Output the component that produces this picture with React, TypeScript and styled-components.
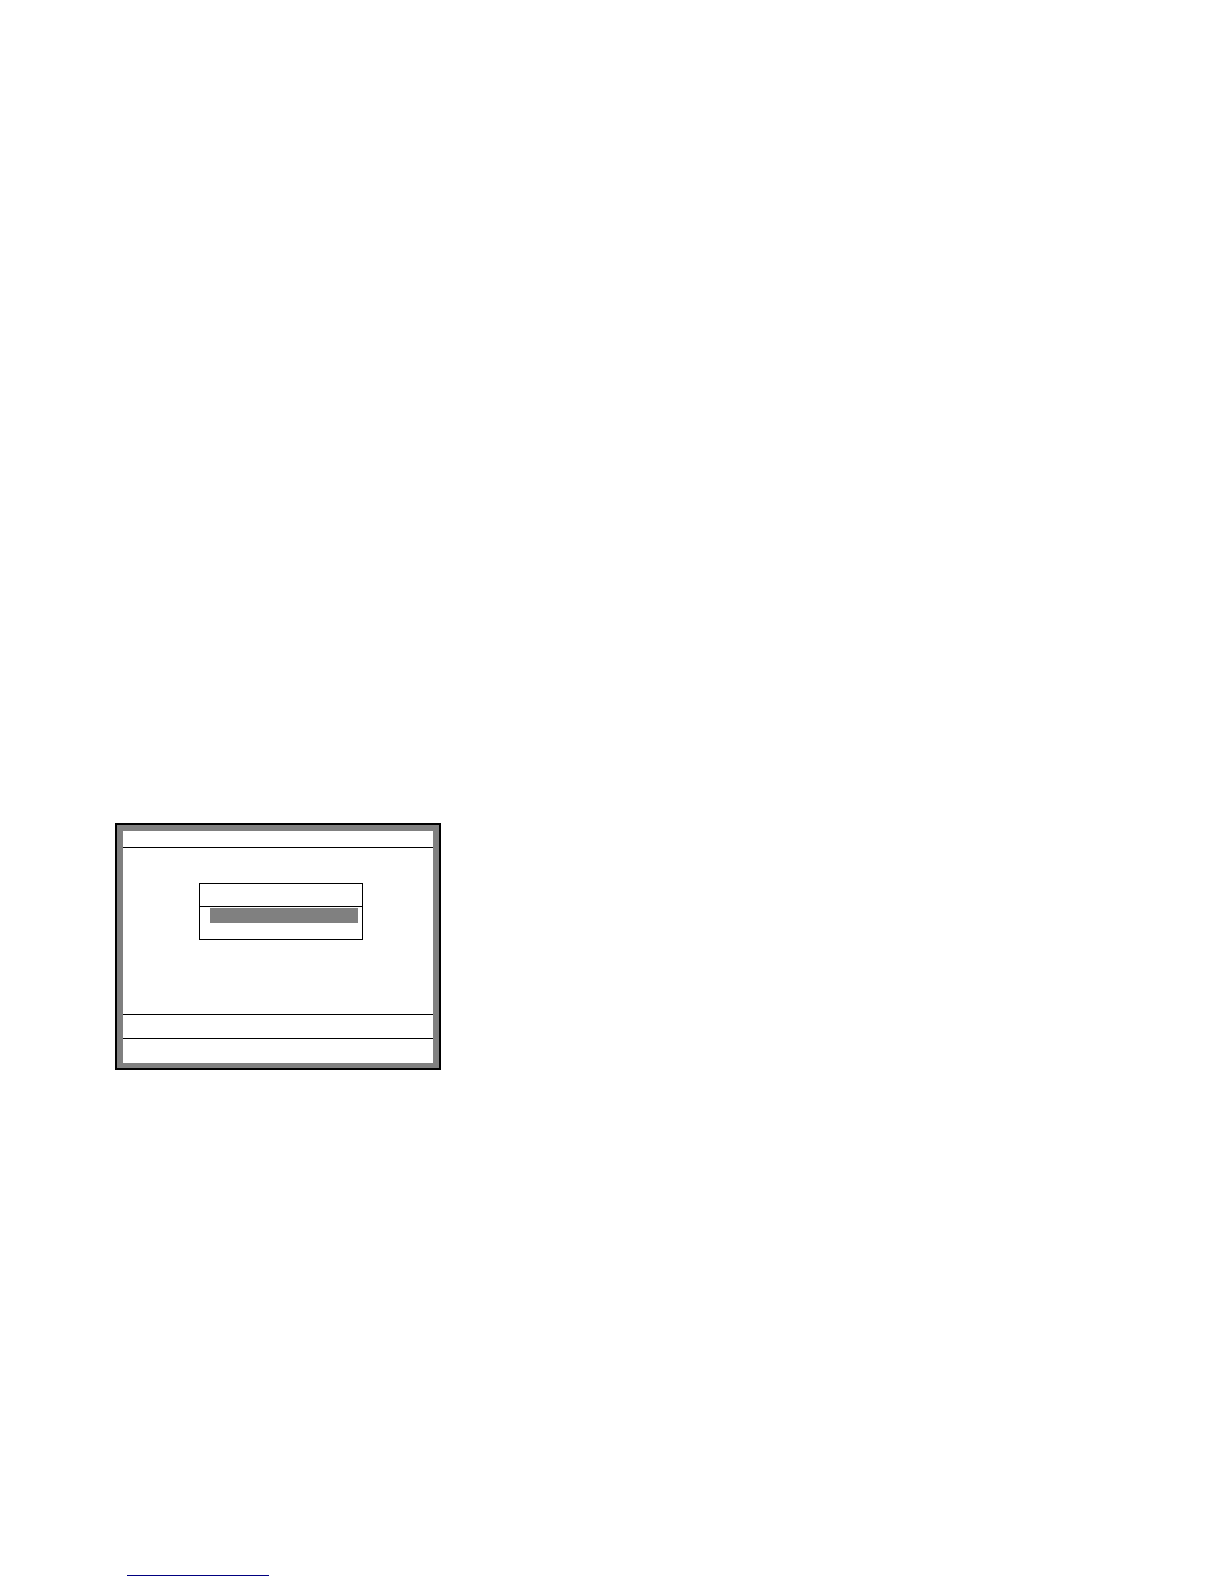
import React from "react";
import styled, { createGlobalStyle } from "styled-components";

const GlobalStyle = createGlobalStyle`
  *, *::before, *::after { box-sizing: border-box; }
  body {
    margin: 0;
    background: #fff;
    font-family: "Liberation Sans", Arial, sans-serif;
  }
`;

const Page = styled.main`
  display: flex;
  flex-direction: column;
  align-items: flex-start;
  min-height: 100vh;
  padding: 823px 115px 8px;
`;

const Screen = styled.section`
  width: 326px;
  max-width: 100%;
  padding: 6px 6px 5px;
  border: 2px solid #000;
  background: #808080;
`;

const Display = styled.div`
  display: flex;
  flex-direction: column;
  background: #fff;
`;

const TitleBar = styled.header`
  height: 17px;
  border-bottom: 1px solid #000;
`;

const Workspace = styled.div`
  height: 166px;
  padding: 35px 70px 0 76px;
`;

const Menu = styled.div`
  border: 1px solid #000;
`;

const MenuTitle = styled.div`
  height: 23px;
  border-bottom: 1px solid #000;
`;

const MenuItems = styled.div`
  display: flex;
  flex-direction: column;
  padding: 1px 4px 1px 10px;
`;

const MenuItem = styled.button<{ $selected?: boolean }>`
  height: 15px;
  padding: 0;
  border: 0;
  background: ${({ $selected }) => ($selected ? "#808080" : "transparent")};
`;

const StatusRow = styled.div<{ $height: number }>`
  height: ${({ $height }) => $height}px;
  border-top: 1px solid #000;
`;

const FooterLink = styled.a`
  display: block;
  width: 142px;
  height: 16px;
  margin: auto 0 0 12px;
  border-bottom: 1px solid #000080;
`;

export default function App() {
  return (
    <>
      <GlobalStyle />
      <Page>
        <Screen>
          <Display>
            <TitleBar />
            <Workspace>
              <Menu>
                <MenuTitle />
                <MenuItems>
                  <MenuItem type="button" aria-label="First option" $selected />
                  <MenuItem type="button" aria-label="Second option" />
                </MenuItems>
              </Menu>
            </Workspace>
            <StatusRow $height={24} />
            <StatusRow $height={25} />
          </Display>
        </Screen>
        <FooterLink href="#" aria-label="Footer link" />
      </Page>
    </>
  );
}
